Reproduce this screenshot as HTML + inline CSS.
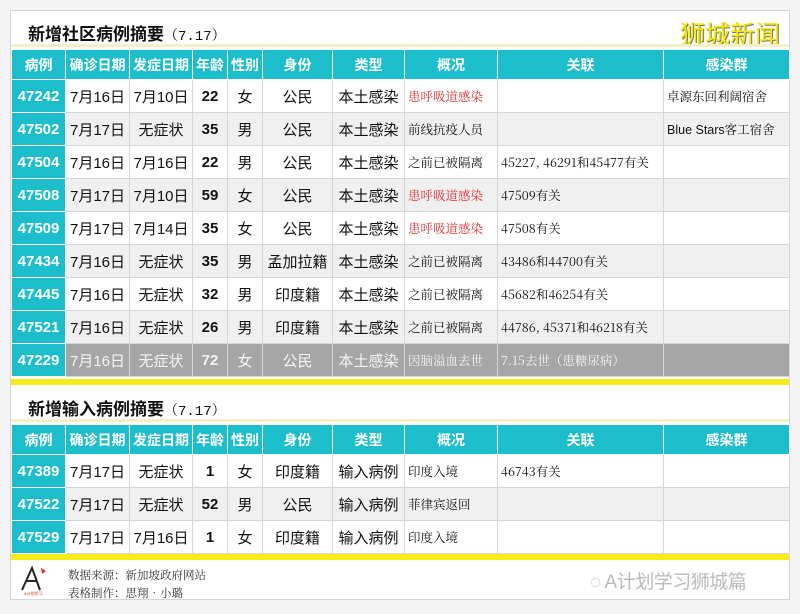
<!DOCTYPE html>
<html><head><meta charset="utf-8"><style>
body{margin:0;width:800px;height:614px;background:#f4f4f4;position:relative;overflow:hidden;font-family:"Liberation Sans","Noto Sans CJK SC",sans-serif;}
.box{position:absolute;left:10px;top:10px;width:780px;height:590px;background:#fff;border:1px solid #d6d6d6;box-sizing:border-box;}
.title{position:absolute;left:28px;font-size:17px;font-weight:bold;color:#111;}
.title span{font-weight:normal;font-size:14px;font-family:"Liberation Mono","Noto Serif CJK SC",monospace;}
.line{position:absolute;left:11px;width:778px;}
table{position:absolute;left:11px;border-collapse:collapse;table-layout:fixed;width:778px;}
td{border:1px solid #d6d6d6;text-align:center;font-size:15px;color:#111;padding:0;white-space:nowrap;overflow:hidden;}
tr.h td{background:#1dbecb;color:#fff;font-weight:bold;font-size:14px;border-color:#fff;height:29px;}
tr.r td{height:32px;}
tr.g td{background:#f0f0f0;}
tr td.id{background:#1dbecb;color:#fff;font-weight:bold;font-size:15px;border-color:#fff;}
td.s{font-family:"Noto Serif CJK SC",serif;font-size:12.5px;text-align:left;padding-left:3px;}
td.red{color:#e23030;}
tr.dk td{background:#a6a6a6;color:#f4f4f4;}
tr.dk td.id{background:#1dbecb;color:#fff;}
</style></head><body>
<div class="box"></div>
<div class="title" style="top:20px">新增社区病例摘要<span>（7.17）</span></div>
<div style="position:absolute;left:680px;top:15px;font-size:25px;color:#f5ea00;text-shadow:1px 1px 0 #777;font-family:'Noto Sans CJK SC',sans-serif">狮城新闻</div>
<div class="line" style="top:44px;height:3px;background:#f3f0c8"></div>
<table style="top:49px">
<colgroup><col style="width:54px"><col style="width:64px"><col style="width:63px"><col style="width:35px"><col style="width:35px"><col style="width:70px"><col style="width:72px"><col style="width:93px"><col style="width:166px"><col style="width:126px"></colgroup>
<tr class="h"><td>病例</td><td>确诊日期</td><td>发症日期</td><td>年龄</td><td>性别</td><td>身份</td><td>类型</td><td>概况</td><td>关联</td><td>感染群</td></tr>
<tr class="r"><td class="id">47242</td><td>7月16日</td><td>7月10日</td><td><b>22</b></td><td>女</td><td>公民</td><td>本土感染</td><td class="s red">患呼吸道感染</td><td class="s"></td><td class="s">卓源东回利阔宿舍</td></tr>
<tr class="r g"><td class="id">47502</td><td>7月17日</td><td>无症状</td><td><b>35</b></td><td>男</td><td>公民</td><td>本土感染</td><td class="s">前线抗疫人员</td><td class="s"></td><td class="s" style="font-family:'Liberation Sans','Noto Serif CJK SC',sans-serif">Blue Stars客工宿舍</td></tr>
<tr class="r"><td class="id">47504</td><td>7月16日</td><td>7月16日</td><td><b>22</b></td><td>男</td><td>公民</td><td>本土感染</td><td class="s">之前已被隔离</td><td class="s">45227, 46291和45477有关</td><td></td></tr>
<tr class="r g"><td class="id">47508</td><td>7月17日</td><td>7月10日</td><td><b>59</b></td><td>女</td><td>公民</td><td>本土感染</td><td class="s red">患呼吸道感染</td><td class="s">47509有关</td><td></td></tr>
<tr class="r"><td class="id">47509</td><td>7月17日</td><td>7月14日</td><td><b>35</b></td><td>女</td><td>公民</td><td>本土感染</td><td class="s red">患呼吸道感染</td><td class="s">47508有关</td><td></td></tr>
<tr class="r g"><td class="id">47434</td><td>7月16日</td><td>无症状</td><td><b>35</b></td><td>男</td><td>孟加拉籍</td><td>本土感染</td><td class="s">之前已被隔离</td><td class="s">43486和44700有关</td><td></td></tr>
<tr class="r"><td class="id">47445</td><td>7月16日</td><td>无症状</td><td><b>32</b></td><td>男</td><td>印度籍</td><td>本土感染</td><td class="s">之前已被隔离</td><td class="s">45682和46254有关</td><td></td></tr>
<tr class="r g"><td class="id">47521</td><td>7月16日</td><td>无症状</td><td><b>26</b></td><td>男</td><td>印度籍</td><td>本土感染</td><td class="s">之前已被隔离</td><td class="s">44786, 45371和46218有关</td><td></td></tr>
<tr class="r dk"><td class="id">47229</td><td>7月16日</td><td>无症状</td><td><b>72</b></td><td>女</td><td>公民</td><td>本土感染</td><td class="s">因脑溢血去世</td><td class="s">7.15去世（患糖尿病）</td><td></td></tr>
</table>
<div class="line" style="top:379px;height:6px;background:#f5ec19"></div>
<div class="title" style="top:395px">新增输入病例摘要<span>（7.17）</span></div>
<div class="line" style="top:419px;height:3px;background:#f3f0c8"></div>
<table style="top:424px">
<colgroup><col style="width:54px"><col style="width:64px"><col style="width:63px"><col style="width:35px"><col style="width:35px"><col style="width:70px"><col style="width:72px"><col style="width:93px"><col style="width:166px"><col style="width:126px"></colgroup>
<tr class="h"><td>病例</td><td>确诊日期</td><td>发症日期</td><td>年龄</td><td>性别</td><td>身份</td><td>类型</td><td>概况</td><td>关联</td><td>感染群</td></tr>
<tr class="r"><td class="id">47389</td><td>7月17日</td><td>无症状</td><td><b>1</b></td><td>女</td><td>印度籍</td><td>输入病例</td><td class="s">印度入境</td><td class="s">46743有关</td><td></td></tr>
<tr class="r g"><td class="id">47522</td><td>7月17日</td><td>无症状</td><td><b>52</b></td><td>男</td><td>公民</td><td>输入病例</td><td class="s">菲律宾返回</td><td class="s"></td><td></td></tr>
<tr class="r"><td class="id">47529</td><td>7月17日</td><td>7月16日</td><td><b>1</b></td><td>女</td><td>印度籍</td><td>输入病例</td><td class="s">印度入境</td><td class="s"></td><td></td></tr>
</table>
<div class="line" style="top:554px;height:6px;background:#f5ec19"></div>
<svg style="position:absolute;left:18px;top:564px" width="34" height="32"><path d="M4 26 L14 4 L22 26 M9 17 L19 17" stroke="#222" stroke-width="2" fill="none"/><path d="M23 4 l5 3 -4 3z" fill="#d33"/><text x="6" y="31" font-size="4" fill="#c33">A计划学习</text></svg>
<div style="position:absolute;left:68px;top:566px;font-size:11.5px;line-height:18px;color:#333;font-family:'Noto Serif CJK SC',serif">数据来源：新加坡政府网站<br>表格制作：思翔•小璐</div>
<div style="position:absolute;left:590px;top:567px;font-size:19px;color:#bbb;letter-spacing:-0.5px">◌ A计划学习狮城篇</div>
</body></html>
